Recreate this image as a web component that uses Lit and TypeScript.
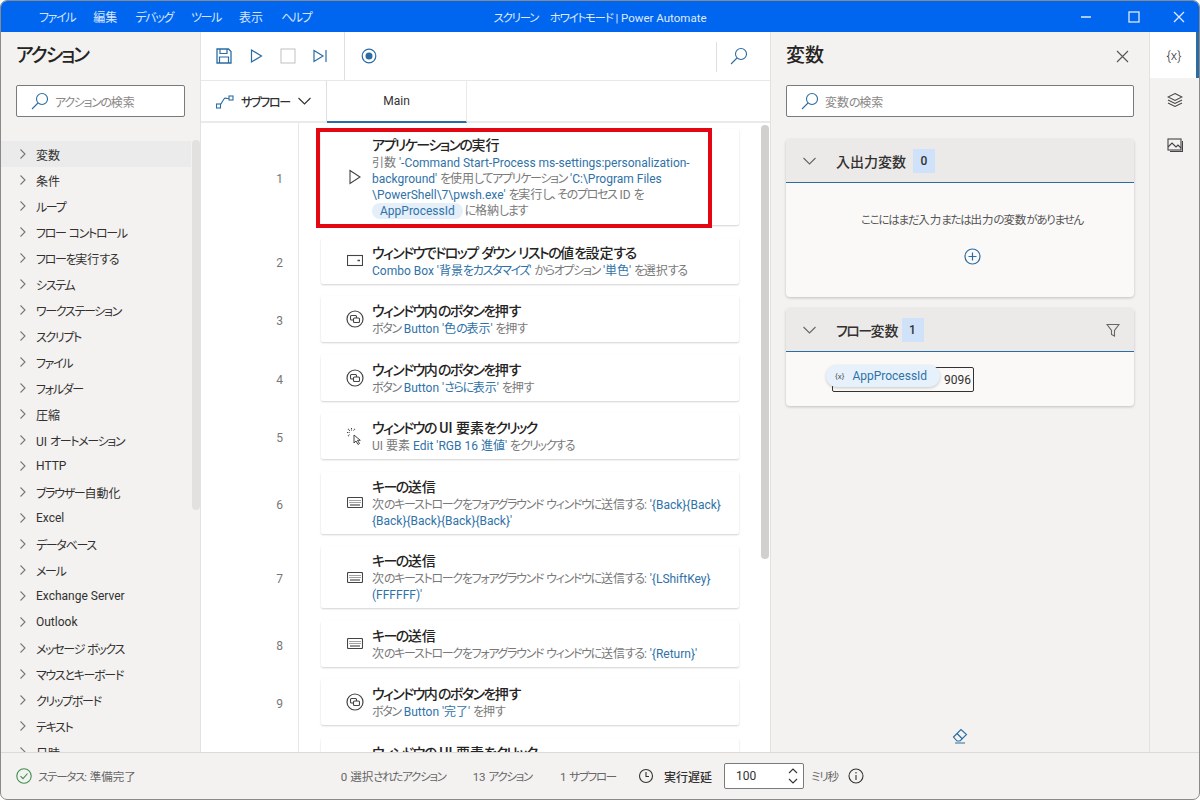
import { LitElement, html, css, svg } from 'lit';
import { customElement } from 'lit/decorators.js';

const actions = ['変数', '条件', 'ループ', 'フロー コントロール', 'フローを実行する', 'システム', 'ワークステーション', 'スクリプト', 'ファイル', 'フォルダー', '圧縮', 'UI オートメーション', 'HTTP', 'ブラウザー自動化', 'Excel', 'データベース', 'メール', 'Exchange Server', 'Outlook', 'メッセージ ボックス', 'マウスとキーボード', 'クリップボード', 'テキスト', '日時'];

// kana in the reference font is much narrower than in Noto, so squeeze kana runs only
const jp = (s: string) => s.split(/([\u3040-\u30ff]+)/).map((p, i) => (i % 2 ? html`<span class="k">${p}</span>` : p));

// '*' toggles the blue value colour, '|' is a line break
const rich = (s: string) => s.split('|').map((line, i) => html`${i ? html`<br>` : ''}${line.split('*').map((p, j) => (j % 2 ? html`<b>${jp(p)}</b>` : jp(p)))}`);

const icon = (body: unknown, w = 16, h = 16) => html`<svg width=${w} height=${h} viewBox="0 0 ${w} ${h}" fill="none" stroke="currentColor" stroke-width="1.1">${body}</svg>`;

const chevronR = icon(svg`<path d="M3.500 1.500 8 6l-4.500 4.500"/>`, 12, 12);
const chevronD = icon(svg`<path d="M1.500 4 7.500 10 13.500 4"/>`, 15, 14);
const search = icon(svg`<circle cx="12" cy="7" r="5.500"/><path d="M8 11 2 17"/>`, 18, 18);
const play = icon(svg`<path d="M3 1.500 13 8 3 14.500Z"/>`);
const btn = icon(svg`<circle cx="9" cy="9" r="8" stroke-width="1.200"/><rect x="4.500" y="5.500" width="6" height="4.500" rx="1"/><rect x="7.500" y="8" width="6" height="4.500" rx="1" fill="#fff"/>`, 18, 18);
const combo = icon(svg`<rect x=".5" y="1.500" width="15" height="10"/><path d="M10.500 6.500h2.500" stroke-width="1.500"/>`, 16, 13);
const keyb = icon(svg`<rect x=".5" y=".5" width="15" height="10" rx="1"/><path d="M2.500 3.500h11M2.500 5.500h11" stroke-dasharray="1 1"/><path d="M3 8h10"/>`, 16, 11);
const click = icon(svg`<path d="M8 8v8l2-2 2 3.500 1.500-1-2-3.200h2.800Z" fill="#fff" stroke-width="1"/><path d="M5.500 1v3M1 5.500h3M2 2l2 2M9 2 7.500 3.500M2 9l1.500-1.500" stroke-dasharray="1 .6"/>`, 17, 18);

interface Step { n: number; icon: unknown; title: string; body: string; pill?: string; mark?: boolean; }

const steps: Step[] = [
  { n: 1, icon: play, mark: true, title: 'アプリケーションの実行', body: "引数 *'-Command Start-Process ms-settings:personalization-*|*background'* を使用してアプリケーション *'C:\\Program Files*|*\\PowerShell\\7\\pwsh.exe'* を実行し、そのプロセス ID を", pill: 'に格納します' },
  { n: 2, icon: combo, title: 'ウィンドウでドロップ ダウン リストの値を設定する', body: "*Combo Box '背景をカスタマイズ'* からオプション *'単色'* を選択する" },
  { n: 3, icon: btn, title: 'ウィンドウ内のボタンを押す', body: "ボタン *Button '色の表示'* を押す" },
  { n: 4, icon: btn, title: 'ウィンドウ内のボタンを押す', body: "ボタン *Button 'さらに表示'* を押す" },
  { n: 5, icon: click, title: 'ウィンドウの UI 要素をクリック', body: "UI 要素 *Edit 'RGB 16 進値'* をクリックする" },
  { n: 6, icon: keyb, title: 'キーの送信', body: "次のキーストロークをフォアグラウンド ウィンドウに送信する: *'{Back}{Back}*|*{Back}{Back}{Back}{Back}'*" },
  { n: 7, icon: keyb, title: 'キーの送信', body: "次のキーストロークをフォアグラウンド ウィンドウに送信する: *'{LShiftKey}*|*(FFFFFF)'*" },
  { n: 8, icon: keyb, title: 'キーの送信', body: "次のキーストロークをフォアグラウンド ウィンドウに送信する: *'{Return}'*" },
  { n: 9, icon: btn, title: 'ウィンドウ内のボタンを押す', body: "ボタン *Button '完了'* を押す" },
  { n: 10, icon: click, title: 'ウィンドウの UI 要素をクリック', body: "UI 要素 *Button* をクリックする" },
];

@customElement('app-root')
export class AppRoot extends LitElement {
  static styles = css`
    :host {
      display: block;
      width: 1200px;
      height: 800px;
      overflow: hidden;
      background: #fff;
      font-family: Roboto, 'Noto Sans CJK JP', sans-serif;
      font-feature-settings: 'palt';
      font-size: 12px;
      color: #323130;
    }
    svg { display: block; flex: none; }
    .k { letter-spacing: -.11em; }
    .window {
      box-sizing: border-box;
      height: 800px;
      display: flex;
      flex-direction: column;
      border: 1px solid #8a8a8a;
      border-radius: 7px;
      overflow: hidden;
      background: #f3f2f1;
    }
    .titlebar {
      height: 31px;
      flex: none;
      background: #0066f0;
      color: #d5e5ff;
      display: flex;
      align-items: center;
    }
    .menu { width: 400px; flex: none; display: flex; gap: 18px; padding-left: 38px; box-sizing: border-box; }
    .wintitle { flex: 1; text-align: center; color: #dfeaff; font-size: 11.5px; }
    .winbtns { width: 400px; flex: none; box-sizing: border-box; display: flex; justify-content: flex-end; gap: 29px; padding-right: 12px; align-items: center; color: #dfeaff; }
    .winbtns svg:first-child { margin-right: 3px; }
    .main { flex: 1; display: flex; min-height: 0; }

    .actions { width: 199px; flex: none; display: flex; flex-direction: column; border-right: 1px solid #e4e2e0; overflow: hidden; position: relative; }
    h2 { margin: 0; font-size: 19px; font-weight: 500; line-height: 26px; color: #252423; flex: none; }
    .actions h2 { padding: 11px 0 0 15px; }
    .searchbox {
      box-sizing: border-box;
      height: 32px;
      flex: none;
      background: #fff;
      border: 1px solid #7a7a7a;
      border-radius: 2px;
      display: flex;
      align-items: center;
      gap: 7px;
      padding-left: 13px;
      color: #8a8886;
    }
    .searchbox svg { color: #2b6ca3; }
    .actions .searchbox { margin: 16px 15px 0; }
    .tree { margin-top: 24px; }
    .tree div { height: 26px; width: 190px; display: flex; align-items: center; gap: 7px; padding-left: 16px; box-sizing: border-box; color: #323130; }
    .tree div svg { color: #777; }
    .tree div:first-child { background: #ebebeb; }
    .thumb1 { position: absolute; left: 191px; top: 108px; width: 8px; height: 370px; border-radius: 4px; background: #e2e1e0; }

    .center { width: 570px; flex: none; display: flex; flex-direction: column; background: #fff; overflow: hidden; border-right: 1px solid #e4e2e0; box-sizing: border-box; }
    .toolbar { height: 49px; flex: none; display: flex; align-items: stretch; border-bottom: 1px solid #e8e8e8; color: #2b6ca3; box-sizing: border-box; }
    .tools { width: 144px; display: flex; align-items: center; gap: 16px; padding-left: 15px; box-sizing: border-box; border-right: 1px solid #e1dfdd; }
    .tools .stop { color: #c8c6c4; }
    .rec { flex: 1; display: flex; align-items: center; padding-left: 16px; }
    .tsearch { width: 54px; display: flex; align-items: center; padding-left: 13px; box-sizing: border-box; position: relative; }
    .tsearch::before { content: ''; position: absolute; left: 0; top: 10px; bottom: 8px; border-left: 1px solid #e1dfdd; }
    .tabs { height: 42px; flex: none; display: flex; border-bottom: 2px solid #eaeaea; box-sizing: border-box; }
    .sub { width: 126px; box-sizing: border-box; display: flex; align-items: center; gap: 7px; padding-left: 15px; border-right: 1px solid #e1dfdd; font-weight: 500; }
    .sub svg:first-child { color: #2b6ca3; }
    .tab { width: 140px; text-align: center; line-height: 40px; border-bottom: 2px solid #2b6ca3; margin-bottom: -2px; box-sizing: border-box; border-right: 1px solid #eaeaea; }
    .flow { flex: 1; min-height: 0; display: flex; position: relative; overflow: hidden; }
    .steps { flex: 1; display: flex; flex-direction: column; gap: 12.5px; padding-top: 6px; }
    .step { display: flex; align-items: center; flex: none; }
    .num { width: 98px; box-sizing: border-box; padding: 4px 16px 0 0; color: #777; flex: none; align-self: stretch; display: flex; align-items: center; justify-content: flex-end; }
    .card {
      box-sizing: border-box;
      margin-left: 22px;
      width: 418px;
      padding: 5px 0;
      display: flex;
      align-items: center;
      background: #fff;
      border-radius: 2px;
      box-shadow: 0 1px 2px rgba(0, 0, 0, .18);
      position: relative;
    }
    .card.marked { padding: 6px 0; }
    .card.marked::after {
      content: '';
      position: absolute;
      left: -5px;
      top: -1px;
      width: 396px;
      height: 100px;
      box-sizing: border-box;
      border: 4px solid #e30613;
    }
    .ic { width: 51px; flex: none; display: flex; justify-content: center; color: #444; padding-left: 16px; box-sizing: border-box; }
    .title { font-size: 14px; line-height: 20px; color: #252423; font-weight: 500; white-space: nowrap; }
    .desc { line-height: 16px; color: #7a7a7a; white-space: nowrap; }
    .desc b { font-weight: 400; color: #2f72a8; }
    .pill { display: inline-block; line-height: 16px; padding: 0 8px; margin-right: 2px; border-radius: 8px; background: #e4eff9; color: #2f72a8; }
    .gutter { position: absolute; left: 97px; top: 0; bottom: 0; border-left: 1px solid #e8e8e8; }
    .thumb2 { position: absolute; left: 560px; top: 2px; width: 8px; height: 434px; border-radius: 4px; background: #d2d0ce; }

    .vars { flex: 1; box-sizing: border-box; display: flex; flex-direction: column; padding: 0 15px; position: relative; }
    .vars h2 { padding-top: 11px; display: flex; justify-content: space-between; align-items: center; }
    .vars h2 svg { color: #555; margin-right: 4px; }
    .vars .searchbox { margin-top: 16px; }
    .panel { margin-top: 22px; background: #faf9f8; border-radius: 4px; box-shadow: 0 1px 3px rgba(0, 0, 0, .2); }
    .panel + .panel { margin-top: 11px; }
    .phead { height: 44px; box-sizing: border-box; background: #ebeae9; border-bottom: 1px solid #2b6ca3; display: flex; align-items: center; padding-left: 16px; border-radius: 4px 4px 0 0; font-size: 14px; font-weight: 500; }
    .phead svg { color: #666; }
    .phead .label { margin-left: 19px; }
    .badge { background: #cfe2fa; width: 22px; height: 24px; line-height: 24px; text-align: center; margin-left: 7px; font-size: 12px; }
    .panel + .panel .badge { margin-left: 3px; }
    .funnel { margin-left: auto; margin-right: 14px; }
    .empty { height: 114px; box-sizing: border-box; padding: 28px 0 0 24px; display: flex; flex-direction: column; align-items: center; gap: 21px; color: #555; font-size: 11.5px; }
    .empty svg { color: #2b6ca3; }
    .varrow { height: 54px; position: relative; }
    .valbox { position: absolute; left: 46px; top: 15px; width: 142px; height: 25px; box-sizing: border-box; border: 1px solid #333; border-radius: 2px; text-align: right; padding-right: 2px; line-height: 25px; }
    .chip { position: absolute; left: 40px; top: 13px; height: 22px; width: 114px; box-sizing: border-box; background: #e6f1fb; border-radius: 11px; box-shadow: 0 1px 3px rgba(0, 0, 0, .2); display: flex; align-items: center; gap: 8px; padding-left: 9px; color: #2f72a8; }
    .chip small { font-size: 8px; color: #555; }
    .eraser { position: absolute; left: 181px; bottom: 8px; color: #2b6ca3; }

    .side { width: 50px; flex: none; border-left: 1px solid #e4e2e0; box-sizing: border-box; display: flex; flex-direction: column; align-items: center; color: #444; }
    .side > div { height: 45px; width: 100%; display: flex; align-items: center; justify-content: center; box-sizing: border-box; padding-bottom: 2px; }
    .side .on { height: 46px; background: #fff; border-right: 3px solid #2b6ca3; font-size: 13px; font-weight: 300; color: #333; padding: 0 0 0 2px; }

    .status { height: 47px; flex: none; border-top: 1px solid #dcdad8; box-sizing: border-box; display: flex; align-items: center; color: #666; padding-left: 15px; font-size: 11.5px; }
    .status > * { flex: none; }
    .ok { color: #3e8e4f; margin-right: 6px; }
    .sel { margin-left: 205px; }
    .cnt { margin-left: 27px; }
    .cnt + .cnt { margin-left: 28px; }
    .clock { margin-left: 22px; color: #333; }
    .delay { font-size: 12px; font-weight: 500; color: #323130; margin: 0 12px 0 10px; }
    .spin { box-sizing: border-box; width: 80px; height: 26px; background: #fff; border: 1px solid #7a7a7a; border-radius: 2px; display: flex; align-items: center; justify-content: space-between; padding: 0 5px 0 11px; color: #323130; font-size: 12px; }
    .arrows { display: flex; flex-direction: column; gap: 4px; color: #333; }
    .ms { margin-left: 7px; }
    .info { margin-left: 9px; color: #333; }
  `;

  render() {
    return html`
      <div class="window">
        <div class="titlebar">
          <div class="menu">${['ファイル', '編集', 'デバッグ', 'ツール', '表示', 'ヘルプ'].map((m) => html`<span>${jp(m)}</span>`)}</div>
          <div class="wintitle">${jp('スクリーン　ホワイトモード')} | Power Automate</div>
          <div class="winbtns">
            ${icon(svg`<path d="M3 8h10" stroke-width="1.300"/>`)}
            ${icon(svg`<rect x="3" y="3" width="10" height="10" stroke-width="1.300"/>`)}
            ${icon(svg`<path d="M3 3l10 10M13 3 3 13" stroke-width="1.300"/>`)}
          </div>
        </div>
        <div class="main">
          <div class="actions">
            <h2>${jp('アクション')}</h2>
            <div class="searchbox">${search}<span>${jp('アクションの検索')}</span></div>
            <div class="tree">${actions.map((a) => html`<div>${chevronR}<span>${jp(a)}</span></div>`)}</div>
            <div class="thumb1"></div>
          </div>
          <div class="center">
            <div class="toolbar">
              <div class="tools">
                ${icon(svg`<path d="M1 1h11.500L15 3.500V15H1Z" stroke-width="1.300"/><path d="M4 1v4.500h7V1M3.500 15V9h9v6" stroke-width="1.200"/>`)}
                ${icon(svg`<path d="M3.500 2 13.500 8 3.500 14Z" stroke-width="1.200"/>`)}
                <span class="stop">${icon(svg`<rect x="1" y="1" width="14" height="14"/>`)}</span>
                ${icon(svg`<path d="M2 2.500 11 8l-9 5.500ZM14 2v12" stroke-width="1.200"/>`)}
              </div>
              <div class="rec">${icon(svg`<circle cx="8" cy="8" r="6.800" stroke-width="1.200"/><circle cx="8" cy="8" r="3.500" fill="currentColor" stroke="none"/>`)}</div>
              <div class="tsearch">${search}</div>
            </div>
            <div class="tabs">
              <div class="sub">
                ${icon(svg`<rect x=".5" y="10" width="4" height="4"/><rect x="13" y="2" width="4" height="4"/><path d="M4.500 10.500 8 5c1-1.500 2-1 3-.500l2 0"/>`, 18, 15)}
                <span>${jp('サブフロー')}</span>
                ${chevronD}
              </div>
              <div class="tab">Main</div>
            </div>
            <div class="flow">
              <div class="gutter"></div>
              <div class="steps">
                ${steps.map((s) => html`
                  <div class="step">
                    <div class="num">${s.n}</div>
                    <div class="card ${s.mark ? 'marked' : ''}">
                      <div class="ic">${s.icon}</div>
                      <div>
                        <div class="title">${jp(s.title)}</div>
                        <div class="desc">${rich(s.body)}${s.pill ? html`<br><span class="pill">AppProcessId</span>${jp(s.pill)}` : ''}</div>
                      </div>
                    </div>
                  </div>`)}
              </div>
              <div class="thumb2"></div>
            </div>
          </div>
          <div class="vars">
            <h2>変数 ${icon(svg`<path d="M2 2l11 11M13 2 2 13"/>`, 15, 15)}</h2>
            <div class="searchbox">${search}<span>${jp('変数の検索')}</span></div>
            <div class="panel">
              <div class="phead">${chevronD}<span class="label">入出力変数</span><span class="badge">0</span></div>
              <div class="empty">
                <span>${jp('ここにはまだ入力または出力の変数がありません')}</span>
                ${icon(svg`<circle cx="8.500" cy="8.500" r="7.500" stroke-width="1.200"/><path d="M8.500 4.500v8M4.500 8.500h8" stroke-width="1.200"/>`, 17, 17)}
              </div>
            </div>
            <div class="panel">
              <div class="phead">${chevronD}<span class="label">${jp('フロー')}変数</span><span class="badge">1</span>
                <span class="funnel">${icon(svg`<path d="M1 1.500h12L8.500 7.500V13L5.500 11.500V7.500Z"/>`, 14, 14)}</span>
              </div>
              <div class="varrow">
                <div class="valbox">9096</div>
                <div class="chip"><small>{x}</small>AppProcessId</div>
              </div>
            </div>
            <div class="eraser">${icon(svg`<path d="M1.500 9 9 1.500 14.500 6.500 8 13H5Z"/><path d="M5 5.500 10.500 11M3 15h10"/>`, 16, 16)}</div>
          </div>
          <div class="side">
            <div class="on">{x}</div>
            <div>${icon(svg`<path d="M8 1.500 15 5 8 8.500 1 5ZM1 8l7 3.500L15 8M1 11l7 3.500 7-3.500"/>`)}</div>
            <div>${icon(svg`<rect x="1" y="2" width="13" height="11"/><path d="M1 10l4-4 4 4 2-2 3 3M15.500 4v10.500H3"/>`)}</div>
          </div>
        </div>
        <div class="status">
          <span class="ok">${icon(svg`<circle cx="8" cy="8" r="7.200"/><path d="M4.500 8.200 7 10.700 11.500 5.500"/>`)}</span>
          <span>${jp('ステータス')}: 準備完了</span>
          <span class="sel">0 ${jp('選択されたアクション')}</span>
          <span class="cnt">13 ${jp('アクション')}</span>
          <span class="cnt">1 ${jp('サブフロー')}</span>
          <span class="clock">${icon(svg`<circle cx="8" cy="8" r="6.500"/><path d="M8 4v4.500h3"/>`)}</span>
          <span class="delay">実行遅延</span>
          <div class="spin">
            <span>100</span>
            <div class="arrows">
              ${icon(svg`<path d="M1 5l4-4 4 4"/>`, 10, 6)}
              ${icon(svg`<path d="M1 1l4 4 4-4"/>`, 10, 6)}
            </div>
          </div>
          <span class="ms">${jp('ミリ')}秒</span>
          <span class="info">${icon(svg`<circle cx="8" cy="8" r="7"/><path d="M8 7v5M8 4v1.500"/>`)}</span>
        </div>
      </div>
    `;
  }
}
